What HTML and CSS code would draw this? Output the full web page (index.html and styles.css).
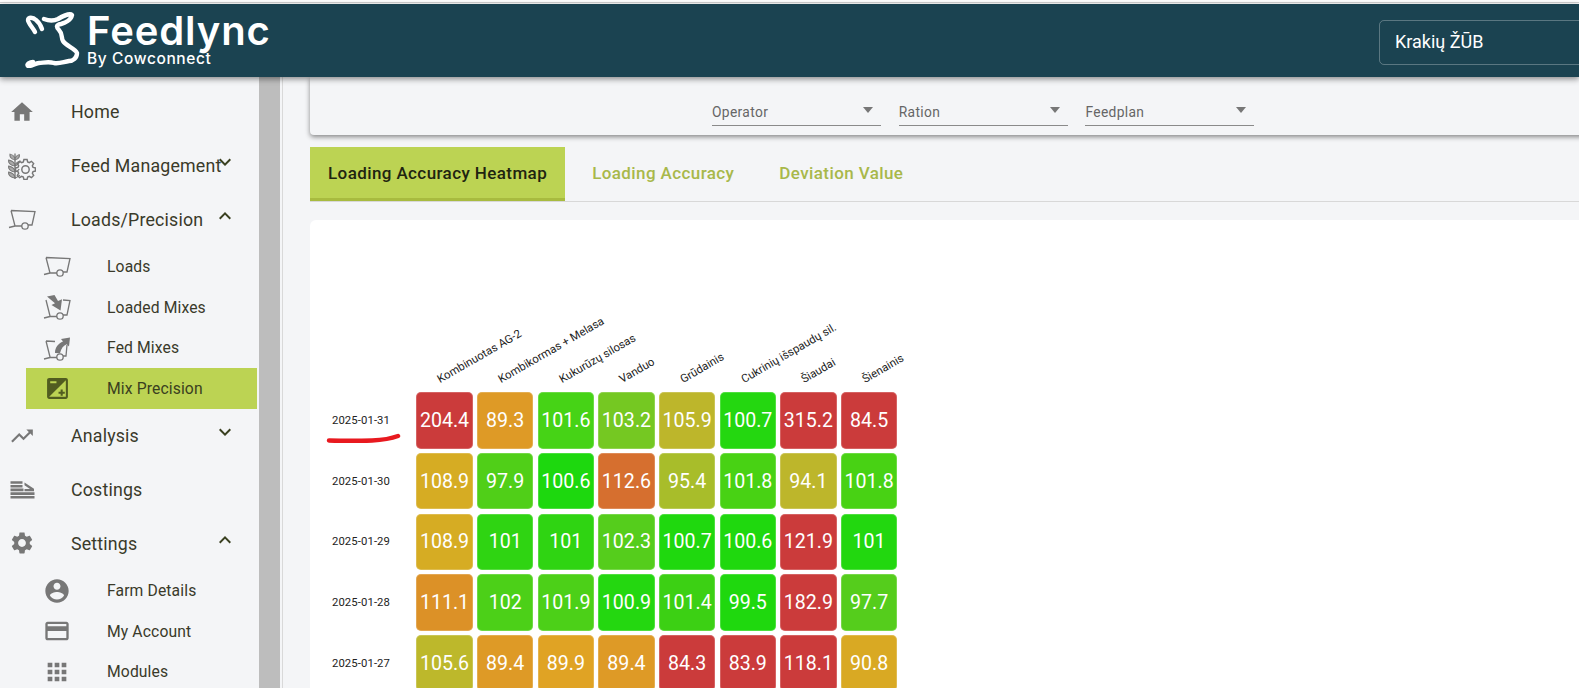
FILE: index.html
```html
<!DOCTYPE html>
<html lang="en">
<head>
<meta charset="utf-8">
<title>Feedlync</title>
<link rel="stylesheet" href="styles.css">
</head>
<body>
<div class="topline"></div>
<header class="header">
  <div class="logo">
    <svg class="cow" viewBox="0 0 60 56" width="60" height="56">
      <path d="M10 20 C8 16 3 11 3 8 C3 5 8 5 11 8 C15 11 16 14 17 17" />
      <path d="M19 7 C24 9 29 9 33 7 C38 4 45 1 47 3 C46 8 40 11 36 12 C31 13 31 15 34 18 C38 22 36 26 38 29 C41 34 50 36 52 41 C52 46 48 49 44 49 C38 50 34 52 29 51 C23 49 18 51 14 51 C10 51 6 55 3 54 C1 52 5 50 8 50" />
    </svg>
    <div class="brand">
      <div class="brand-name">Feedlync</div>
      <div class="brand-sub">By Cowconnect</div>
    </div>
  </div>
  <div class="farm">Krakių ŽŪB</div>
</header>
<div class="body-row">
  <nav class="sidebar">
    <a class="item"><span class="ico"><svg viewBox="0 0 24 24" width="26" height="26" class="fill"><path d="M10 20v-6h4v6h5v-8h3L12 3 2 12h3v8z"/></svg></span><span class="label">Home</span></a>
    <a class="item"><span class="ico"><svg viewBox="0 0 28 28" width="28" height="28" class="line"><path d="M7 1.500V27"/><g transform="translate(7 0) scale(1.400 1) translate(-7 0)"><path class="grain" d="M7 8C4.500 7 3 5 3.500 2 6 3 7 5 7 8zM7 8c2.500-1 3.500-3 3-5.500C8 3.500 7 5.500 7 8zM7 14c-3-.5-5-3-4.500-6C5.500 9 7 11 7 14zM7 14c2-1 3-2.500 3.500-5C8.500 10 7 11.500 7 14zM7 20c-3-.5-5-3-4.500-6C5.500 15 7 17 7 20zM7 20c1.500-.5 2.500-1.500 3-3M7 26c-3-.5-5-3-4.500-6C5.500 21 7 23 7 26zM7 26c1.500-.5 2.500-1.500 3.500-3"/></g><g transform="translate(17.500 17.500) scale(1.120)"><path d="M6.730-1.930L8.890-1.410 8.890 1.410 6.730 1.930 6.120 3.390 7.280 5.290 5.290 7.280 3.390 6.120 1.930 6.730 1.410 8.890-1.410 8.890-1.930 6.730-3.390 6.120-5.290 7.280-7.280 5.290-6.120 3.390-6.730 1.930-8.890 1.410-8.890-1.410-6.730-1.930-6.120-3.390-7.280-5.290-5.290-7.280-3.390-6.120-1.930-6.730-1.410-8.890 1.410-8.890 1.930-6.730 3.390-6.120 5.290-7.280 7.280-5.290 6.120-3.390z"/><circle r="3.300"/></g></svg></span><span class="label">Feed Management</span><svg class="chev" viewBox="0 0 24 24" width="24" height="24"><path d="M16.590 8.590L12 13.170 7.410 8.590 6 10l6 6 6-6z"/></svg></a>
    <a class="item"><span class="ico"><svg viewBox="0 0 28 21" width="28" height="21" class="line"><path d="M3 1.500l24 1-3 13.500h-4M3 1.500l4 15.500M1 18.500l6-1.500h7"/><circle cx="17" cy="17" r="3.200"/></svg></span><span class="label">Loads/Precision</span><svg class="chev" viewBox="0 0 24 24" width="24" height="24"><path d="M12 8l-6 6 1.410 1.410L12 10.830l4.590 4.580L18 14z"/></svg></a>
    <a class="item sub"><span class="ico"><svg viewBox="0 0 28 21" width="28" height="21" class="line"><path d="M3 1.500l24 1-3 13.500h-4M3 1.500l4 15.500M1 18.500l6-1.500h7"/><circle cx="17" cy="17" r="3.200"/></svg></span><span class="label">Loads</span></a>
    <a class="item sub"><span class="ico"><svg viewBox="0 0 28 26" width="28" height="26" class="line"><path d="M20 6l7 .5-3 14.500h-4M3 6l4 16M1 24l6-1.500h7"/><circle cx="17" cy="22" r="3.200"/><path class="solid" d="M4 2.500l7.500-1.500 3.500 6 4-1.800-1.500 11.300-9-5.500 3.500-1.800z"/></svg></span><span class="label">Loaded Mixes</span></a>
    <a class="item sub"><span class="ico"><svg viewBox="0 0 28 26" width="28" height="26" class="line"><path d="M3 6l9 .5M24 10l-1 11h-3M3 6l4 16M1 24l6-1.500h7"/><circle cx="17" cy="22" r="3.200"/><path class="solid" d="M12 18c0-6 3.500-9.500 8-11.500l-2-2.500 9-1.500-1 9-2.300-2.200c-3 1-5.700 4-6.700 9z"/></svg></span><span class="label">Fed Mixes</span></a>
    <a class="item sub active"><span class="ico"><svg viewBox="0 0 24 24" width="25" height="25" class="fill"><path d="M15 17v2h2v-2h2v-2h-2v-2h-2v2h-2v2h2zm5-15H4c-1.100 0-2 .9-2 2v16c0 1.100.9 2 2 2h16c1.100 0 2-.9 2-2V4c0-1.100-.9-2-2-2zM5 5h6v2H5V5zm15 15H4L20 4v16z"/></svg></span><span class="label">Mix Precision</span></a>
    <a class="item"><span class="ico"><svg viewBox="0 0 24 24" width="26" height="26" class="fill"><path d="M16 6l2.290 2.290-4.880 4.880-4-4L2 16.590 3.410 18l6-6 4 4 6.300-6.290L22 12V6z"/></svg></span><span class="label">Analysis</span><svg class="chev" viewBox="0 0 24 24" width="24" height="24"><path d="M16.590 8.590L12 13.170 7.410 8.590 6 10l6 6 6-6z"/></svg></a>
    <a class="item"><span class="ico"><svg viewBox="0 0 24 18" width="25" height="18" class="fill"><path d="M0 .2h12v2.600H0zM0 3.900h12v2.600H0zM0 7.600h13v2.600H0zM0 11.300h24v2.600H0zM0 15h24v2.600H0zM14 1.500l9.500 6.300v2.400H14V8h5.500L14 4.200z"/></svg></span><span class="label">Costings</span></a>
    <a class="item"><span class="ico"><svg viewBox="0 0 24 24" width="26" height="26" class="fill"><path d="M19.140 12.940c.04-.3.060-.61.060-.94 0-.32-.02-.64-.07-.94l2.030-1.580c.18-.14.230-.41.120-.61l-1.920-3.320c-.12-.22-.37-.29-.59-.22l-2.390.96c-.5-.38-1.030-.7-1.620-.94l-.36-2.540c-.04-.24-.24-.41-.48-.41h-3.840c-.24 0-.43.170-.47.410l-.36 2.540c-.59.240-1.130.570-1.620.94l-2.390-.96c-.22-.08-.47 0-.59.220L2.740 8.870c-.12.210-.08.470.12.610l2.030 1.580c-.05.3-.09.630-.09.940s.02.640.07.940l-2.030 1.580c-.18.140-.23.410-.12.610l1.920 3.320c.12.220.37.290.59.220l2.390-.96c.5.380 1.030.7 1.620.94l.36 2.540c.05.240.24.410.48.410h3.840c.24 0 .44-.17.470-.41l.36-2.540c.59-.24 1.130-.56 1.620-.94l2.390.96c.22.080.47 0 .59-.22l1.920-3.320c.12-.22.070-.47-.12-.61l-2.010-1.580zM12 15.600c-1.980 0-3.600-1.620-3.600-3.600s1.620-3.600 3.600-3.600 3.600 1.620 3.600 3.600-1.620 3.600-3.600 3.600z"/></svg></span><span class="label">Settings</span><svg class="chev" viewBox="0 0 24 24" width="24" height="24"><path d="M12 8l-6 6 1.410 1.410L12 10.830l4.590 4.580L18 14z"/></svg></a>
    <a class="item sub"><span class="ico"><svg viewBox="0 0 24 24" width="28" height="28" class="fill"><path d="M12 2C6.480 2 2 6.480 2 12s4.480 10 10 10 10-4.480 10-10S17.520 2 12 2zm0 3c1.660 0 3 1.340 3 3s-1.340 3-3 3-3-1.340-3-3 1.340-3 3-3zm0 14.200c-2.500 0-4.710-1.280-6-3.220.03-1.990 4-3.080 6-3.080 1.990 0 5.970 1.090 6 3.080-1.290 1.940-3.500 3.220-6 3.220z"/></svg></span><span class="label">Farm Details</span></a>
    <a class="item sub"><span class="ico"><svg viewBox="0 0 24 24" width="28" height="28" class="fill"><path d="M20 4H4c-1.110 0-1.990.89-1.990 2L2 18c0 1.110.89 2 2 2h16c1.110 0 2-.89 2-2V6c0-1.110-.89-2-2-2zm0 14H4v-6h16v6zm0-10H4V6h16v2z"/></svg></span><span class="label">My Account</span></a>
    <a class="item sub"><span class="ico"><svg viewBox="0 0 24 24" width="28" height="28" class="fill"><path d="M4 8h4V4H4v4zm6 12h4v-4h-4v4zm-6 0h4v-4H4v4zm0-6h4v-4H4v4zm6 0h4v-4h-4v4zm6-10v4h4V4h-4zm-6 4h4V4h-4v4zm6 6h4v-4h-4v4zm0 6h4v-4h-4v4z"/></svg></span><span class="label">Modules</span></a>
  </nav>
  <div class="scrollbar"></div>
  <div class="gutter"></div>
  <main class="main">
    <section class="filters">
      <div class="select"><span>Operator</span><i class="arrow"></i></div>
      <div class="select"><span>Ration</span><i class="arrow"></i></div>
      <div class="select"><span>Feedplan</span><i class="arrow"></i></div>
    </section>
    <div class="tabs">
      <div class="tab on">Loading Accuracy Heatmap</div>
      <div class="tab">Loading Accuracy</div>
      <div class="tab">Deviation Value</div>
    </div>
    <section class="panel">
      <div class="heat">
        <div></div>
        <div class="col"><span>Kombinuotas AG-2</span></div>
        <div class="col"><span>Kombikormas + Melasa</span></div>
        <div class="col"><span>Kukurūzų silosas</span></div>
        <div class="col"><span>Vanduo</span></div>
        <div class="col"><span>Grūdainis</span></div>
        <div class="col"><span>Cukrinių išspaudų sil.</span></div>
        <div class="col"><span>Šiaudai</span></div>
        <div class="col"><span>Šienainis</span></div>

        <div class="date">2025-01-31</div>
        <div class="cell" style="background:#cb3b3b">204.4</div>
        <div class="cell" style="background:#de9a26">89.3</div>
        <div class="cell" style="background:#46d316">101.6</div>
        <div class="cell" style="background:#75c822">103.2</div>
        <div class="cell" style="background:#bdb62b">105.9</div>
        <div class="cell" style="background:#24d710">100.7</div>
        <div class="cell" style="background:#cb3b3b">315.2</div>
        <div class="cell" style="background:#cb3b3b">84.5</div>

        <div class="date">2025-01-30</div>
        <div class="cell" style="background:#d6ac23">108.9</div>
        <div class="cell" style="background:#50cf18">97.9</div>
        <div class="cell" style="background:#1dd80e">100.6</div>
        <div class="cell" style="background:#d66f2f">112.6</div>
        <div class="cell" style="background:#a8bd2a">95.4</div>
        <div class="cell" style="background:#48d214">101.8</div>
        <div class="cell" style="background:#bdb62b">94.1</div>
        <div class="cell" style="background:#48d214">101.8</div>

        <div class="date">2025-01-29</div>
        <div class="cell" style="background:#d6ac23">108.9</div>
        <div class="cell" style="background:#2fd412">101</div>
        <div class="cell" style="background:#2fd412">101</div>
        <div class="cell" style="background:#55cd1c">102.3</div>
        <div class="cell" style="background:#1fd80e">100.7</div>
        <div class="cell" style="background:#1fd80e">100.6</div>
        <div class="cell" style="background:#cb3b3b">121.9</div>
        <div class="cell" style="background:#22d70f">101</div>

        <div class="date">2025-01-28</div>
        <div class="cell" style="background:#dc9127">111.1</div>
        <div class="cell" style="background:#4cd018">102</div>
        <div class="cell" style="background:#4cd018">101.9</div>
        <div class="cell" style="background:#24d710">100.9</div>
        <div class="cell" style="background:#3cd014">101.4</div>
        <div class="cell" style="background:#1fd80e">99.5</div>
        <div class="cell" style="background:#cb3b3b">182.9</div>
        <div class="cell" style="background:#55cd1c">97.7</div>

        <div class="date">2025-01-27</div>
        <div class="cell" style="background:#bdb82b">105.6</div>
        <div class="cell" style="background:#de9a26">89.4</div>
        <div class="cell" style="background:#e0a324">89.9</div>
        <div class="cell" style="background:#de9a26">89.4</div>
        <div class="cell" style="background:#cb3b3b">84.3</div>
        <div class="cell" style="background:#cb3b3b">83.9</div>
        <div class="cell" style="background:#cb3b3b">118.1</div>
        <div class="cell" style="background:#d9a923">90.8</div>
      </div>
      <svg class="scribble" viewBox="0 0 76 10" width="76" height="10"><path d="M3 7.500C20 8 30 8 46 7.500C56 7 64 6 72 3"/></svg>
    </section>
  </main>
</div>
</body>
</html>
```

FILE: styles.css
```css
* { box-sizing: border-box; }
html, body { margin: 0; height: 688px; overflow: hidden; background: #fff; }
body { display: flex; flex-direction: column; font-family: Roboto, "Liberation Sans", sans-serif; color: #3a3a2a; }

.topline { height: 3px; margin-bottom: 1px; border-bottom: 1px solid #d4d4d4; background: #fff; flex: none; }

.header { flex: none; height: 73px; background: #1b4351; color: #fff; display: flex; align-items: center; box-shadow: 0 2px 6px rgba(0,0,0,.45); position: relative; z-index: 2; }
.logo { display: flex; align-items: flex-start; width: 1379px; height: 73px; padding: 8px 0 0 25px; }
.cow { flex: none; margin-right: 2px; }
.cow path { fill: none; stroke: #fff; stroke-width: 4.400; stroke-linecap: round; stroke-linejoin: round; }
.brand { line-height: 1; }
.brand-name { font-family: Inter, "Liberation Sans", sans-serif; font-size: 40px; font-weight: 600; letter-spacing: .9px; line-height: 38px; height: 38px; }
.brand-sub { font-family: Inter, "Liberation Sans", sans-serif; font-size: 15.500px; font-weight: 500; letter-spacing: .6px; line-height: 16px; margin-top: 1px; }
.farm { flex: 1; height: 45px; margin: 3px -10px 0 0; border: 1px solid rgba(255,255,255,.28); border-radius: 5px; padding-left: 15px; font-size: 18px; line-height: 42px; }

.body-row { flex: 1; display: flex; min-height: 0; }

.sidebar { flex: none; width: 259px; background: #f4f5f7; padding-top: 8px; }
.item { display: flex; align-items: center; height: 53.900px; font-size: 17.800px; letter-spacing: .18px; white-space: nowrap; }
.ico { flex: none; display: flex; align-items: center; justify-content: center; width: 44px; margin-right: 27px; }
.label { flex: none; width: 142px; }
.chev { flex: none; fill: #3a4020; margin-bottom: 7px; }
.fill { fill: #777; }
.line { fill: none; stroke: #777; stroke-width: 1.300; }
.line .solid { fill: #777; stroke: none; }
.line .grain { fill: #aaa; stroke-width: .8; }

.sub { height: 40.500px; font-size: 15.700px; letter-spacing: .12px; margin-left: 26px; }
.sub .ico { width: 62px; margin-right: 19px; }
.active { background: #bcd353; width: 231px; color: #3a4020; }
.active .fill { fill: #515c20; }

.scrollbar { flex: none; width: 21px; background: #bdbdbd; }
.gutter { flex: none; width: 3px; background: #f4f5f7; border-right: 1px solid #d9d9d9; }

.main { flex: 1; min-width: 0; background: #f4f5f7; padding-left: 27px; overflow: hidden; }

.filters { height: 58px; margin-right: -20px; background: #f4f5f7; border-radius: 0 0 4px 4px; box-shadow: 0 2px 5px rgba(0,0,0,.45); display: flex; gap: 17.700px; padding: 23px 0 0 402px; margin-bottom: 12px; }
.select { position: relative; width: 169px; height: 26px; border-bottom: 1px solid #8a8a8a; font-size: 13.800px; letter-spacing: .35px; color: #666; line-height: 24px; display: flex; justify-content: space-between; }
.arrow { width: 0; height: 0; margin: 7px 8px 0 0; border-left: 5.500px solid transparent; border-right: 5.500px solid transparent; border-top: 6px solid #777; }

.tabs { display: flex; gap: 9px; height: 55px; margin-right: -20px; border-bottom: 1px solid #d8d8d8; }
.tab { padding: 0 18px; height: 54px; line-height: 53px; font-size: 17px; font-weight: 500; letter-spacing: .4px; color: #a8b84a; border-bottom: 3px solid transparent; white-space: nowrap; }
.tab.on { background: #bcd353; border-bottom-color: #a8bb3f; color: #1f2410; }

.panel { position: relative; margin: 18px -20px 0 0; height: 520px; background: #fff; border-radius: 6px 0 0 0; }
.heat { display: grid; grid-template-columns: 102px repeat(8, 56.340px); grid-auto-rows: 56.340px; grid-template-rows: 168px; gap: 4.330px; }
.col { position: relative; }
.col span { display: block; position: absolute; left: 25px; bottom: 3px; transform: rotate(-30deg); transform-origin: 0 100%; font-size: 11.400px; line-height: 12px; color: #222; white-space: nowrap; }
.date { display: flex; align-items: center; justify-content: center; font-size: 11.300px; letter-spacing: .1px; color: #222; }
.cell { display: flex; align-items: center; justify-content: center; color: #fff; font-size: 19.600px; font-weight: 450; border-radius: 5px; box-shadow: inset 0 0 0 1px rgba(255,255,255,.2); }

.scribble { position: absolute; left: 16px; top: 213px; }
.scribble path { fill: none; stroke: #e8191f; stroke-width: 4.500; stroke-linecap: round; }
```
